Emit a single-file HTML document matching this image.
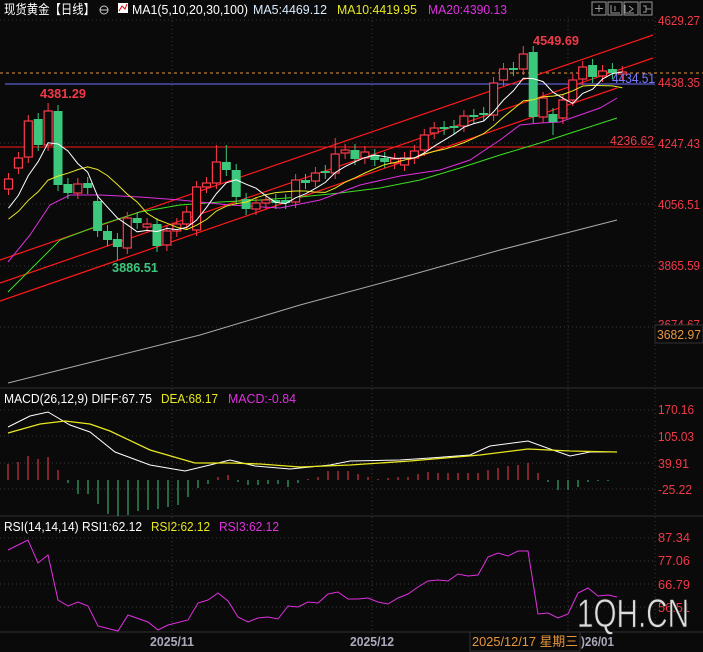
<!DOCTYPE html>
<html><head><meta charset="utf-8"><style>
body{margin:0;background:#0a0a0a;width:703px;height:652px;overflow:hidden;font-family:"Liberation Sans","Noto Sans CJK SC",sans-serif}
svg{position:absolute;left:0;top:0}
text{font-family:"Liberation Sans","Noto Sans CJK SC",sans-serif}
</style></head><body>
<svg id="s" width="703" height="652" viewBox="0 0 703 652" font-size="12">
<rect width="703" height="652" fill="#0a0a0a"/>
<g stroke="#3a3a3a" stroke-dasharray="1,3" stroke-width="1">
<line x1="0" y1="20" x2="655" y2="20"/><line x1="0" y1="143" x2="655" y2="143"/><line x1="0" y1="204" x2="655" y2="204"/><line x1="0" y1="266" x2="655" y2="266"/><line x1="0" y1="327" x2="655" y2="327"/>
<line x1="0" y1="410" x2="655" y2="410"/><line x1="0" y1="436" x2="655" y2="436"/><line x1="0" y1="463" x2="655" y2="463"/><line x1="0" y1="489" x2="655" y2="489"/>
<line x1="0" y1="538" x2="655" y2="538"/><line x1="0" y1="561" x2="655" y2="561"/><line x1="0" y1="584" x2="655" y2="584"/><line x1="0" y1="607" x2="655" y2="607"/>
<line x1="172" y1="17" x2="172" y2="632"/><line x1="372" y1="17" x2="372" y2="632"/><line x1="568" y1="17" x2="568" y2="632"/>
<line x1="655" y1="17" x2="655" y2="632"/>
</g>
<line x1="0" y1="388" x2="703" y2="388" stroke="#333"/>
<line x1="0" y1="516" x2="703" y2="516" stroke="#333"/>
<line x1="0" y1="632" x2="703" y2="632" stroke="#333"/>
<line x1="0" y1="73" x2="703" y2="73" stroke="#e8963c" stroke-dasharray="3,3"/>
<line x1="5" y1="84" x2="655" y2="84" stroke="#7070ff"/>
<line x1="0" y1="147" x2="655" y2="147" stroke="#ff1a1a"/>
<g stroke="#ff1a1a" stroke-width="1.2">
<line x1="0" y1="260" x2="653" y2="35"/><line x1="0" y1="283" x2="653" y2="58"/><line x1="0" y1="301" x2="617" y2="88"/>
</g>
<polyline fill="none" stroke="#aaa" points="8,383 100,360 200,335 300,305 400,278 500,250 617,220"/>
<polyline fill="none" stroke="#3ce020" points="8,292 40,260 60,240 100,225 140,212 180,205 220,202 260,200 300,197 340,193 380,188 420,180 460,168 500,155 540,143 580,130 617,118"/>
<polyline fill="none" stroke="#e030e0" points="8,262 30,235 50,205 70,195 100,195 140,197 180,200 230,205 280,208 320,200 360,185 400,176 440,170 470,160 500,140 520,125 540,123 560,122 580,115 600,108 617,98"/>
<g id="cand"></g>
<g id="mas"></g>
<polyline fill="none" stroke="#fff" points="8,427 30,416 48,412 70,425 90,432 115,452 150,465 185,471 210,465 230,460 255,466 290,469 330,465 350,461 400,460 430,458 470,455 490,446 528,441 550,449 570,456 590,452 617,452"/>
<polyline fill="none" stroke="#e8e820" stroke-width="1.3" points="8,433 40,424 65,421 90,424 110,431 150,450 195,463 230,463 260,464 300,467 350,465 410,461 480,455 528,449 570,451 617,452"/>
<g id="hist"></g>
<polyline fill="none" stroke="#e030e0" points="8,550 28,540 38,563 48,555 58,600 68,606 78,602 88,606 98,626 118,631 128,615 148,622 158,630 168,625 188,620 198,603 208,600 218,593 228,601 238,617 248,622 258,618 268,617 278,619 288,606 298,607 308,602 318,603 328,594 338,592 348,599 358,599 368,598 378,602 388,604 398,598 408,594 418,587 428,581 438,580 448,581 458,574 468,576 478,575 488,557 498,553 508,556 518,551 528,551 538,614 548,613 558,618 568,614 578,593 588,588 598,596 608,595 617,597"/>
<g font-size="13" lengthAdjust="spacingAndGlyphs">
<text x="4" y="14" fill="#fff" textLength="91" lengthAdjust="spacingAndGlyphs">现货黄金【日线】</text>
<text x="132" y="14" fill="#fff" textLength="116" lengthAdjust="spacingAndGlyphs">MA1(5,10,20,30,100)</text>
<text x="253" y="14" fill="#d8ecff" textLength="74" lengthAdjust="spacingAndGlyphs">MA5:4469.12</text>
<text x="337" y="14" fill="#e8e820" textLength="80" lengthAdjust="spacingAndGlyphs">MA10:4419.95</text>
<text x="428" y="14" fill="#e030e0" textLength="79" lengthAdjust="spacingAndGlyphs">MA20:4390.13</text>
</g>
<circle cx="104" cy="10" r="4" fill="none" stroke="#ccc"/><line x1="100" y1="10" x2="108" y2="10" stroke="#ccc"/>
<rect x="118" y="3" width="10" height="10" fill="#fff"/><polyline points="119,11 122,6 125,9 127,4" fill="none" stroke="#d00"/>
<g fill="none" stroke="#999"><rect x="592" y="2" width="14" height="13"/><rect x="608" y="2" width="14" height="13"/><rect x="624" y="2" width="14" height="13"/><rect x="640" y="2" width="12" height="13"/>
<path d="M599 5v7M595 8.5h8M611 5v8h9M615 6v5M625 5v8h9M629 6l4 3-4 3M643 6h3v6h-3M646 9h5"/></g>
<g fill="#f03a48" font-size="13">
<text x="658" y="25" textLength="42" lengthAdjust="spacingAndGlyphs">4629.27</text><text x="658" y="87" textLength="42" lengthAdjust="spacingAndGlyphs">4438.35</text><text x="658" y="148" textLength="42" lengthAdjust="spacingAndGlyphs">4247.43</text><text x="658" y="209" textLength="42" lengthAdjust="spacingAndGlyphs">4056.51</text><text x="658" y="270" textLength="42" lengthAdjust="spacingAndGlyphs">3865.59</text><text x="658" y="329" textLength="42" lengthAdjust="spacingAndGlyphs">3674.67</text>
<text x="658" y="414" textLength="36" lengthAdjust="spacingAndGlyphs">170.16</text><text x="658" y="441" textLength="36" lengthAdjust="spacingAndGlyphs">105.03</text><text x="658" y="468" textLength="31" lengthAdjust="spacingAndGlyphs">39.91</text><text x="658" y="494" textLength="34" lengthAdjust="spacingAndGlyphs">-25.22</text>
<text x="658" y="542" textLength="32" lengthAdjust="spacingAndGlyphs">87.34</text><text x="658" y="565" textLength="32" lengthAdjust="spacingAndGlyphs">77.06</text><text x="658" y="589" textLength="32" lengthAdjust="spacingAndGlyphs">66.79</text><text x="658" y="612" textLength="32" lengthAdjust="spacingAndGlyphs">56.51</text>
<text x="40" y="98" font-weight="bold" textLength="46" lengthAdjust="spacingAndGlyphs">4381.29</text><text x="533" y="45" font-weight="bold" textLength="46" lengthAdjust="spacingAndGlyphs">4549.69</text><text x="610" y="145" textLength="44" lengthAdjust="spacingAndGlyphs">4236.62</text>
</g>
<text x="112" y="272" fill="#3cc87c" font-weight="bold" font-size="13" textLength="46" lengthAdjust="spacingAndGlyphs">3886.51</text>
<text x="612" y="83" fill="#7a7aff" font-size="14" textLength="43" lengthAdjust="spacingAndGlyphs">4434.51</text>
<rect x="655" y="325" width="48" height="18" fill="#0a0a0a" stroke="#333"/>
<text x="657" y="339" fill="#e8963c" font-size="13" textLength="44" lengthAdjust="spacingAndGlyphs">3682.97</text>
<g font-size="13"><text x="4" y="403" fill="#fff" textLength="148" lengthAdjust="spacingAndGlyphs">MACD(26,12,9) DIFF:67.75</text><text x="161" y="403" fill="#e8e820" textLength="57" lengthAdjust="spacingAndGlyphs">DEA:68.17</text><text x="228" y="403" fill="#e030e0" textLength="68" lengthAdjust="spacingAndGlyphs">MACD:-0.84</text>
<text x="4" y="531" fill="#fff" textLength="138" lengthAdjust="spacingAndGlyphs">RSI(14,14,14) RSI1:62.12</text><text x="151" y="531" fill="#e8e820" textLength="59" lengthAdjust="spacingAndGlyphs">RSI2:62.12</text><text x="219" y="531" fill="#e030e0" textLength="60" lengthAdjust="spacingAndGlyphs">RSI3:62.12</text></g>
<text x="577" y="627" fill="#ddd" stroke="#222" stroke-width="0.8" font-size="40" textLength="112" lengthAdjust="spacingAndGlyphs">1QH.CN</text>
<g font-size="13"><text x="150" y="646" fill="#aab" font-weight="bold" textLength="44" lengthAdjust="spacingAndGlyphs">2025/11</text><text x="350" y="646" fill="#aab" font-weight="bold" textLength="44" lengthAdjust="spacingAndGlyphs">2025/12</text>
<rect x="470" y="632" width="110" height="19" fill="#0a0a0a" stroke="#333"/>
<text x="472" y="646" fill="#e8963c" textLength="106" lengthAdjust="spacingAndGlyphs">2025/12/17 星期三</text><text x="581" y="646" fill="#aab" font-weight="bold" textLength="33" lengthAdjust="spacingAndGlyphs">)26/01</text></g>
</svg>
<script>
var C=[[179,189,'r'],[158,168,'r'],[121,157,'r'],[119,145,'g'],[111,145,'r',103],[111,185,'g'],[184,193,'g'],[184,193,'r'],[183,188,'g'],[201,231,'g'],[231,240,'g'],[239,247,'g',0,260],[218,248,'r'],[218,223,'g'],[224,227,'r'],[224,246,'g'],[231,245,'r'],[224,231,'r'],[212,224,'r'],[187,230,'r'],[183,187,'r'],[162,183,'r',145],[162,170,'g',145],[170,197,'g'],[199,209,'g'],[203,209,'r'],[200,203,'r'],[200,203,'g'],[200,203,'g'],[180,202,'r'],[180,183,'g'],[173,181,'r'],[171,173,'g'],[154,173,'r',138],[150,153,'r'],[150,159,'g'],[152,158,'r'],[155,160,'g'],[158,162,'g'],[159,163,'r'],[158,165,'r'],[151,158,'r'],[135,150,'r'],[128,133,'r'],[127,129,'g'],[126,128,'g'],[116,126,'r'],[115,117,'g'],[113,115,'g'],[83,115,'r'],[69,80,'r'],[68,70,'g'],[54,69,'r',46],[52,117,'g'],[98,117,'r'],[114,122,'g',0,135],[100,118,'r'],[80,100,'r'],[67,79,'r'],[65,77,'g'],[71,76,'r'],[69,73,'g'],[72,74,'r']];
var g=document.getElementById('cand'),s='';
var closes=[];
C.forEach(function(c,i){var x=8.5+i*9.9,hi=c[3]||c[0]-6,lo=c[4]||c[1]+6;var col=c[2]=='r'?'#ff3a4a':'#3cc87c';
s+='<line x1="'+x+'" y1="'+hi+'" x2="'+x+'" y2="'+lo+'" stroke="'+col+'"/>';
if(c[2]=='r')s+='<rect x="'+(x-4)+'" y="'+c[0]+'" width="8" height="'+Math.max(1,c[1]-c[0])+'" fill="#0a0a0a" stroke="'+col+'" stroke-width="1.2"/>';
else s+='<rect x="'+(x-4.5)+'" y="'+c[0]+'" width="9" height="'+Math.max(1.5,c[1]-c[0])+'" fill="'+col+'"/>';
closes.push(c[2]=='r'?c[0]:c[1]);});
g.innerHTML=s;
var pre=[235,235,232,230,228,225,222,220,215,205];var all=pre.concat(closes);
function ma(n){var p=[];for(var i=0;i<closes.length;i++){var k=i+pre.length,t=0;for(var j=0;j<n;j++)t+=all[k-j];p.push((8.5+i*9.9).toFixed(1)+','+(t/n).toFixed(1));}return p.join(' ');}
document.getElementById('mas').innerHTML='<polyline fill="none" stroke="#e8e820" points="'+ma(10)+'"/><polyline fill="none" stroke="#fff" points="'+ma(5)+'"/>';
var H=[464,462,456,459,457,470,483,494,494,504,514,516,515,511,510,509,507,505,497,488,484,477,475,482,485,485,484,484,487,483,479,477,471,471,471,474,477,479,478,477,477,474,472,473,473,473,473,473,470,468,466,465,463,473,482,490,490,487,482,481,481,480];
var h='';H.forEach(function(y,i){var x=8+i*10;var col=y<480?'#ff3a4a':'#3cc87c';h+='<line x1="'+x+'" y1="480" x2="'+x+'" y2="'+y+'" stroke="'+col+'"/>';});
document.getElementById('hist').innerHTML=h;
</script>
</body></html>
